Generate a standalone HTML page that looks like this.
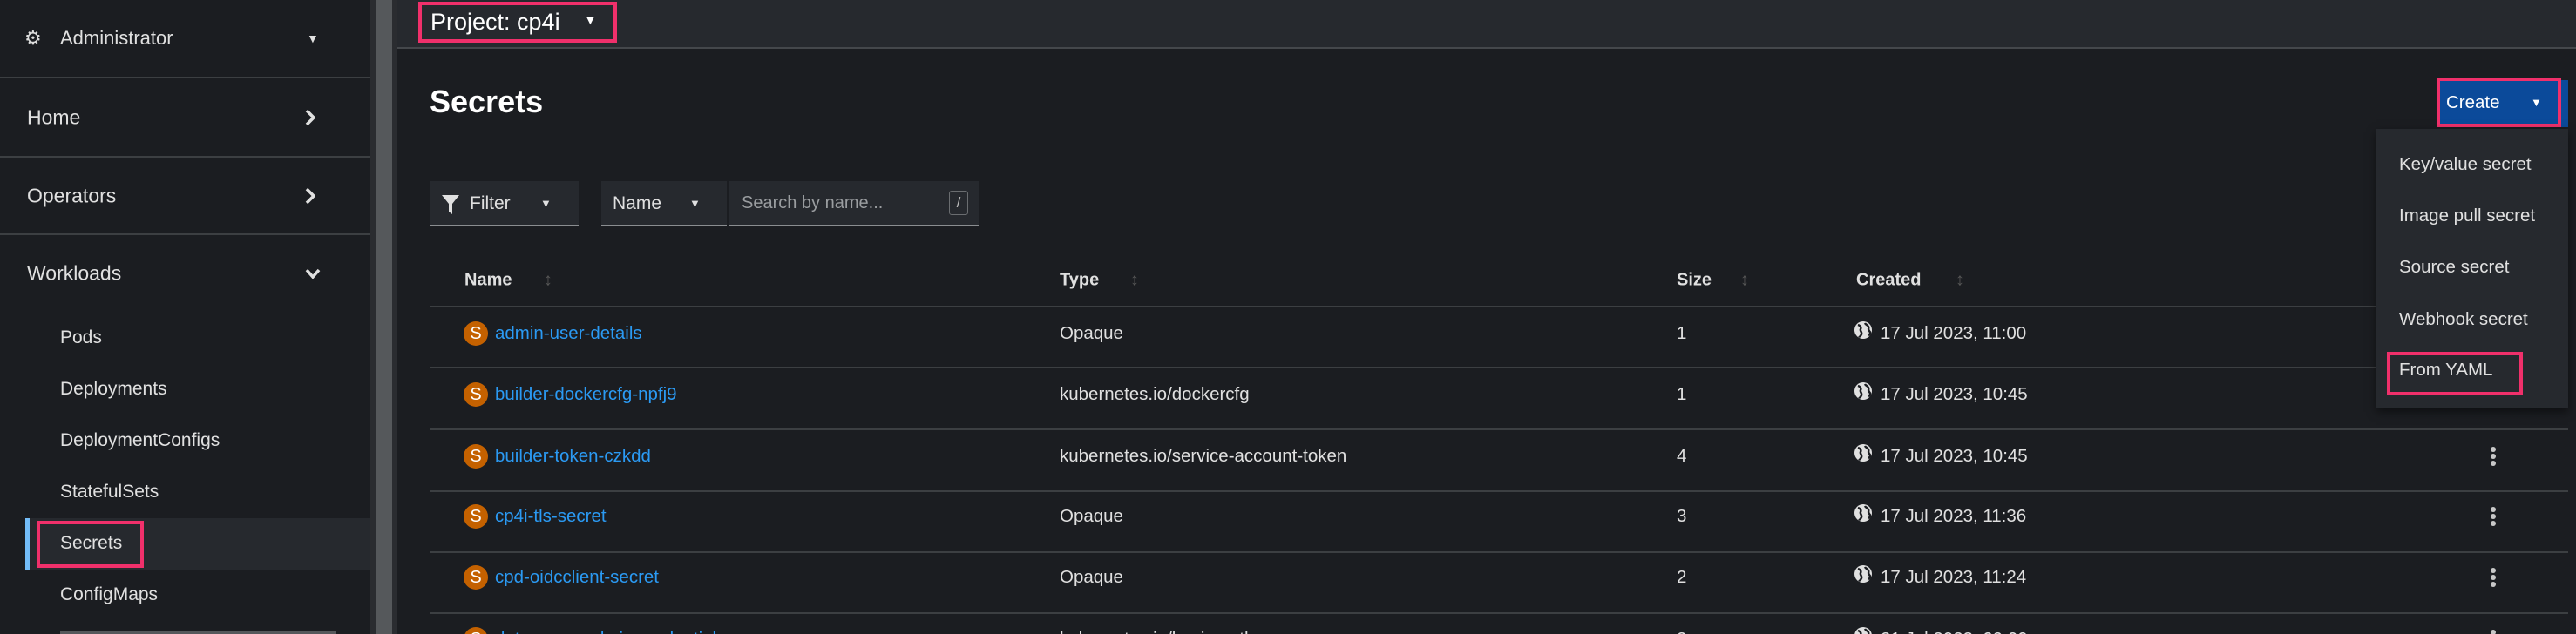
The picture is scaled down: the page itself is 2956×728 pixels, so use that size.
<!DOCTYPE html>
<html style="width:2956px;height:728px;overflow:hidden"><head><meta charset="utf-8"><style>
*{margin:0;padding:0;box-sizing:border-box}
body{width:2956px;height:728px;overflow:hidden;background:#1b1d21;font-family:"Liberation Sans",sans-serif;color:#e0e0e0;position:relative}
.a{position:absolute;white-space:nowrap}
.side{left:0;top:0;width:425px;height:728px;background:#1b1d21}
.sep{left:0;width:425px;height:2px;background:#3c3f42}
.nav{left:31px;font-size:23px;color:#e0e0e0;transform:translateY(-50%)}
.sub{left:69px;font-size:21px;color:#e0e0e0;transform:translateY(-50%)}
.chev{left:350px;transform:translateY(-50%)}
.row{left:493px;width:2454px;height:2px;background:#3c3f42}
.t{font-size:20.5px;color:#e0e0e0;transform:translateY(-50%)}
.lnk{color:#2b9af3}
.s{width:28px;height:28px;border-radius:50%;background:#c46100;color:#fff;font-size:20px;text-align:center;line-height:28px}
.h{font-size:20px;font-weight:bold;color:#e0e0e0;transform:translateY(-50%)}
.sort{color:#555;font-size:20px;transform:translateY(-50%)}
.keb{left:2858px;width:6px;transform:translateY(-50%)}
.keb i{display:block;width:6px;height:6px;border-radius:50%;background:#c8c8c8;margin:2px 0}
.mi{left:2753px;font-size:20.5px;color:#e0e0e0;transform:translateY(-50%)}
.pink{border:4px solid #f0306b}
.g{left:2127px;width:22px;height:22px}
</style></head><body>
<div class="a side"></div>
<div class="a" style="left:425px;top:0;width:30px;height:728px;background:#2a2c30"></div>
<div class="a" style="left:432px;top:0;width:18px;height:728px;background:#55585b"></div>
<div class="a" style="left:455px;top:0;width:2501px;height:56px;background:#26292e;border-bottom:2px solid #44474b"></div>

<div class="a" style="left:28px;top:31px;font-size:22px;color:#ddd">⚙</div>
<div class="a nav" style="left:69px;top:44px;font-size:22px">Administrator</div>
<div class="a" style="left:352px;top:36px;font-size:14px">▼</div>
<div class="a sep" style="top:88px"></div>
<div class="a nav" style="top:135px">Home</div>
<svg class="a chev" style="top:135px" width="12" height="20" viewBox="0 0 12 20"><path d="M2 2l8 8-8 8" stroke="#e0e0e0" stroke-width="3.5" fill="none"/></svg>
<div class="a sep" style="top:179px"></div>
<div class="a nav" style="top:225px">Operators</div>
<svg class="a chev" style="top:225px" width="12" height="20" viewBox="0 0 12 20"><path d="M2 2l8 8-8 8" stroke="#e0e0e0" stroke-width="3.5" fill="none"/></svg>
<div class="a sep" style="top:268px"></div>
<div class="a nav" style="top:314px">Workloads</div>
<svg class="a chev" style="top:314px;left:350px" width="18" height="12" viewBox="0 0 18 12"><path d="M2 2l7 8 7-8" stroke="#e0e0e0" stroke-width="3.5" fill="none"/></svg>
<div class="a sub" style="top:388px">Pods</div>
<div class="a sub" style="top:447px">Deployments</div>
<div class="a sub" style="top:506px">DeploymentConfigs</div>
<div class="a sub" style="top:565px">StatefulSets</div>
<div class="a" style="left:29px;top:595px;width:396px;height:59px;background:#26292e;border-left:5px solid #73bcf7"></div>
<div class="a pink" style="left:42px;top:598px;width:123px;height:54px"></div>
<div class="a sub" style="top:624px">Secrets</div>
<div class="a sub" style="top:683px">ConfigMaps</div>
<div class="a" style="left:69px;top:724px;width:317px;height:4px;background:#55585b"></div>

<div class="a pink" style="left:480px;top:2px;width:228px;height:47px"></div>
<div class="a" style="left:494px;top:10px;font-size:27px;color:#fff">Project: cp4i</div>
<div class="a" style="left:670px;top:15px;font-size:15px;color:#fff">▼</div>

<div class="a" style="left:493px;top:96px;font-size:36px;font-weight:bold;color:#fff">Secrets</div>

<div class="a" style="left:493px;top:208px;width:171px;height:52px;background:#26292e;border-bottom:2px solid #8a8d90"></div>
<svg class="a" style="left:506px;top:223px" width="22" height="24" viewBox="0 0 22 24"><path d="M1 1h20l-8 10v12l-4-3v-9z" fill="#e0e0e0"/></svg>
<div class="a" style="left:539px;top:222px;font-size:21px;color:#e0e0e0">Filter</div>
<div class="a" style="left:620px;top:226px;font-size:13px">▼</div>
<div class="a" style="left:690px;top:208px;width:144px;height:52px;background:#26292e;border-bottom:2px solid #8a8d90"></div>
<div class="a" style="left:703px;top:222px;font-size:21px">Name</div>
<div class="a" style="left:791px;top:226px;font-size:13px">▼</div>
<div class="a" style="left:837px;top:208px;width:286px;height:52px;background:#26292e;border-bottom:2px solid #8a8d90"></div>
<div class="a" style="left:851px;top:222px;font-size:20px;color:#9a9da0">Search by name...</div>
<div class="a" style="left:1089px;top:219px;width:22px;height:28px;border:1px solid #6a6d70;border-radius:3px;font-size:17px;text-align:center;line-height:26px;color:#bbb">/</div>

<div class="a h" style="left:533px;top:322px">Name</div><div class="a sort" style="left:624px;top:322px">↕</div>
<div class="a h" style="left:1216px;top:322px">Type</div><div class="a sort" style="left:1297px;top:322px">↕</div>
<div class="a h" style="left:1924px;top:322px">Size</div><div class="a sort" style="left:1997px;top:322px">↕</div>
<div class="a h" style="left:2130px;top:322px">Created</div><div class="a sort" style="left:2244px;top:322px">↕</div>
<div class="a row" style="top:351px"></div>
<div class="a row" style="top:421px"></div>
<div class="a row" style="top:492px"></div>
<div class="a row" style="top:563px"></div>
<div class="a row" style="top:633px"></div>
<div class="a row" style="top:703px"></div>

<svg width="0" height="0" style="position:absolute"><defs><symbol id="gl" viewBox="0 0 22 22"><circle cx="11" cy="11" r="10" fill="#e0e0e0"/><path d="M5 5c3 1 4 3 3 5s2 3 1 6c-1 2-2 3-3 2M13 3c1 2 3 2 4 4s-1 3 1 5 1 4-1 5" stroke="#1b1d21" stroke-width="2.5" fill="none"/></symbol></defs></svg>

<div class="a s" style="left:532px;top:369px">S</div><div class="a t lnk" style="left:568px;top:383px">admin-user-details</div>
<div class="a t" style="left:1216px;top:383px">Opaque</div><div class="a t" style="left:1924px;top:383px">1</div>
<svg class="a g" style="top:368px"><use href="#gl"/></svg><div class="a t" style="left:2158px;top:383px">17 Jul 2023, 11:00</div>

<div class="a s" style="left:532px;top:439px">S</div><div class="a t lnk" style="left:568px;top:453px">builder-dockercfg-npfj9</div>
<div class="a t" style="left:1216px;top:453px">kubernetes.io/dockercfg</div><div class="a t" style="left:1924px;top:453px">1</div>
<svg class="a g" style="top:438px"><use href="#gl"/></svg><div class="a t" style="left:2158px;top:453px">17 Jul 2023, 10:45</div>

<div class="a s" style="left:532px;top:510px">S</div><div class="a t lnk" style="left:568px;top:524px">builder-token-czkdd</div>
<div class="a t" style="left:1216px;top:524px">kubernetes.io/service-account-token</div><div class="a t" style="left:1924px;top:524px">4</div>
<svg class="a g" style="top:509px"><use href="#gl"/></svg><div class="a t" style="left:2158px;top:524px">17 Jul 2023, 10:45</div>
<div class="a keb" style="top:524px"><i></i><i></i><i></i></div>

<div class="a s" style="left:532px;top:579px">S</div><div class="a t lnk" style="left:568px;top:593px">cp4i-tls-secret</div>
<div class="a t" style="left:1216px;top:593px">Opaque</div><div class="a t" style="left:1924px;top:593px">3</div>
<svg class="a g" style="top:578px"><use href="#gl"/></svg><div class="a t" style="left:2158px;top:593px">17 Jul 2023, 11:36</div>
<div class="a keb" style="top:593px"><i></i><i></i><i></i></div>

<div class="a s" style="left:532px;top:649px">S</div><div class="a t lnk" style="left:568px;top:663px">cpd-oidcclient-secret</div>
<div class="a t" style="left:1216px;top:663px">Opaque</div><div class="a t" style="left:1924px;top:663px">2</div>
<svg class="a g" style="top:648px"><use href="#gl"/></svg><div class="a t" style="left:2158px;top:663px">17 Jul 2023, 11:24</div>
<div class="a keb" style="top:663px"><i></i><i></i><i></i></div>

<div class="a s" style="left:532px;top:720px">S</div><div class="a t lnk" style="left:568px;top:734px">datapower-admin-credentials</div>
<div class="a t" style="left:1216px;top:734px">kubernetes.io/basic-auth</div><div class="a t" style="left:1924px;top:734px">2</div>
<svg class="a g" style="top:719px"><use href="#gl"/></svg><div class="a t" style="left:2158px;top:734px">21 Jul 2023, 09:00</div>
<div class="a keb" style="top:734px"><i></i><i></i><i></i></div>

<div class="a" style="left:2796px;top:92px;width:151px;height:54px;background:#0b4a9a"></div>
<div class="a pink" style="left:2796px;top:89px;width:143px;height:57px"></div>
<div class="a" style="left:2807px;top:106px;font-size:20.5px;color:#fff">Create</div>
<div class="a" style="left:2904px;top:110px;font-size:13px;color:#fff">▼</div>

<div class="a" style="left:2727px;top:148px;width:220px;height:321px;background:#26292e;box-shadow:0 4px 10px rgba(0,0,0,.5)"></div>
<div class="a mi" style="top:189px">Key/value secret</div>
<div class="a mi" style="top:248px">Image pull secret</div>
<div class="a mi" style="top:307px">Source secret</div>
<div class="a mi" style="top:367px">Webhook secret</div>
<div class="a pink" style="left:2739px;top:404px;width:156px;height:50px"></div>
<div class="a mi" style="top:425px">From YAML</div>
</body></html>
